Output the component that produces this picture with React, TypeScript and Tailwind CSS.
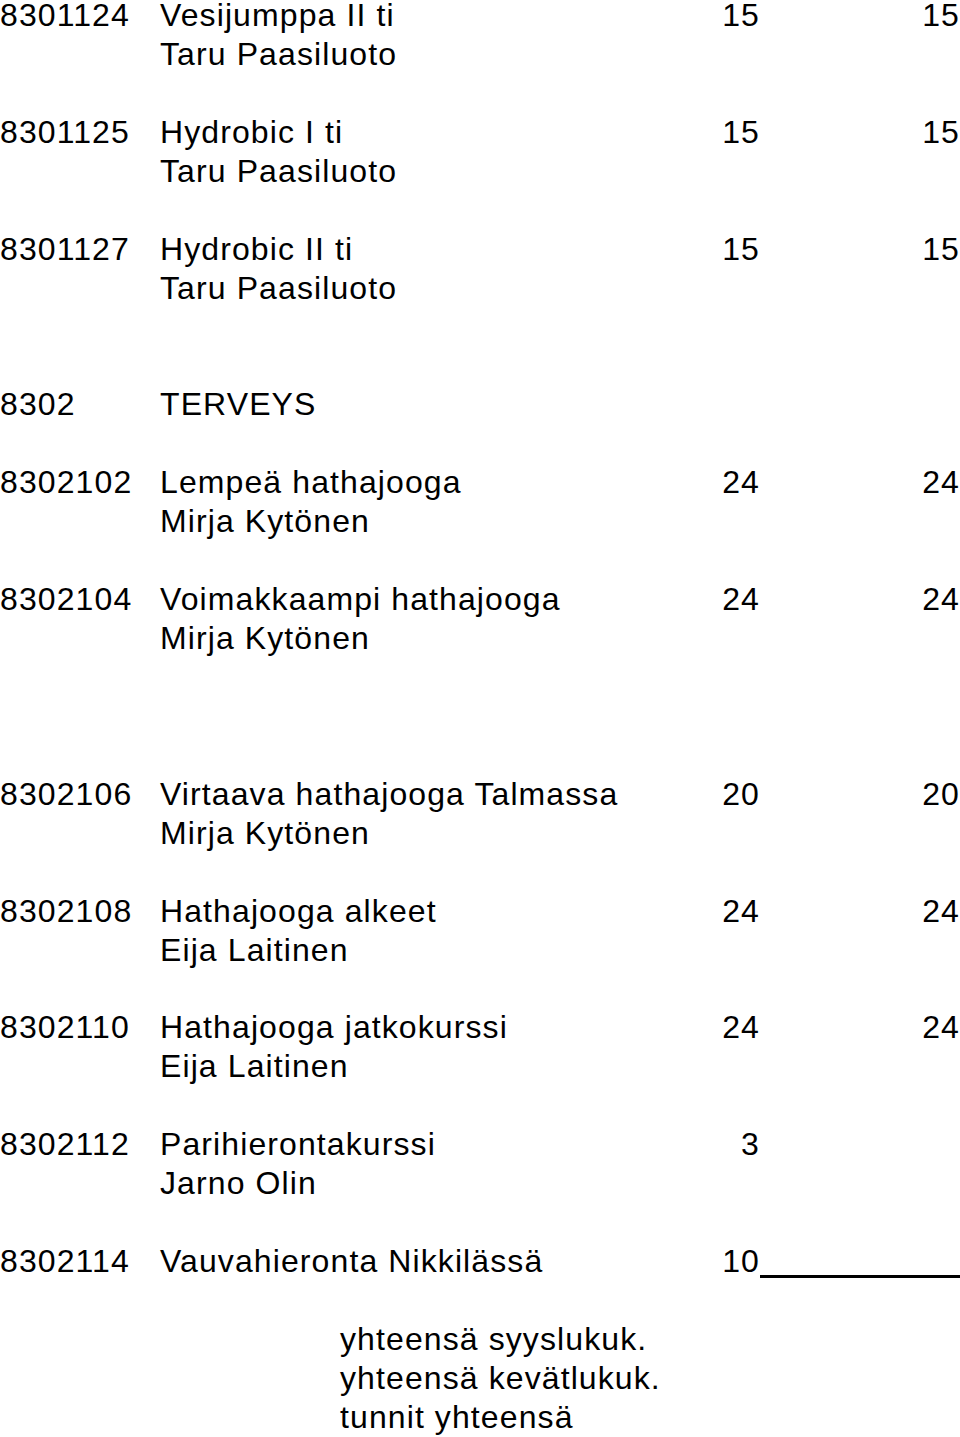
type Course = {
  code: string;
  title: string;
  teacher?: string;
  a?: string;
  b?: string;
  blank: number; // empty lines before this entry
  underline?: boolean;
};

const courses: Course[] = [
  { code: "8301124", title: "Vesijumppa II ti", teacher: "Taru Paasiluoto", a: "15", b: "15", blank: 0 },
  { code: "8301125", title: "Hydrobic I ti", teacher: "Taru Paasiluoto", a: "15", b: "15", blank: 1 },
  { code: "8301127", title: "Hydrobic II ti", teacher: "Taru Paasiluoto", a: "15", b: "15", blank: 1 },
  { code: "8302", title: "TERVEYS", blank: 2 },
  { code: "8302102", title: "Lempeä hathajooga", teacher: "Mirja Kytönen", a: "24", b: "24", blank: 1 },
  { code: "8302104", title: "Voimakkaampi hathajooga", teacher: "Mirja Kytönen", a: "24", b: "24", blank: 1 },
  { code: "8302106", title: "Virtaava hathajooga Talmassa", teacher: "Mirja Kytönen", a: "20", b: "20", blank: 3 },
  { code: "8302108", title: "Hathajooga alkeet", teacher: "Eija Laitinen", a: "24", b: "24", blank: 1 },
  { code: "8302110", title: "Hathajooga jatkokurssi", teacher: "Eija Laitinen", a: "24", b: "24", blank: 1 },
  { code: "8302112", title: "Parihierontakurssi", teacher: "Jarno Olin", a: "3", blank: 1 },
  { code: "8302114", title: "Vauvahieronta Nikkilässä", a: "10", blank: 1, underline: true },
];

const gapClass = ["mt-0", "mt-[38.94px]", "mt-[77.88px]", "mt-[116.82px]"];

function Row({ c }: { c: Course }) {
  return (
    <div className={`grid grid-cols-[160px_1fr_120px_200px] ${gapClass[c.blank]}`}>
      <div>{c.code}</div>
      <div>
        <div>{c.title}</div>
        {c.teacher && <div>{c.teacher}</div>}
      </div>
      <div className="text-right">{c.a}</div>
      {c.underline ? (
        <div className="self-start h-[36px] border-b-[3px] border-black"></div>
      ) : (
        <div className="text-right">{c.b}</div>
      )}
    </div>
  );
}

export default function App() {
  return (
    <div
      className="w-[960px] h-[1437px] overflow-hidden bg-white text-black text-[32px] leading-[38.94px] tracking-[1.1px]"
      style={{ fontFamily: '"Liberation Sans", Arial, sans-serif' }}
    >
      <div className="mt-[-4px]">
        {courses.map((c) => (
          <Row key={c.code} c={c} />
        ))}

        {/* totals */}
        <div className="mt-[38.94px] pl-[340px]">
          <div>yhteensä syyslukuk.</div>
          <div>yhteensä kevätlukuk.</div>
          <div>tunnit yhteensä</div>
        </div>
      </div>
    </div>
  );
}
